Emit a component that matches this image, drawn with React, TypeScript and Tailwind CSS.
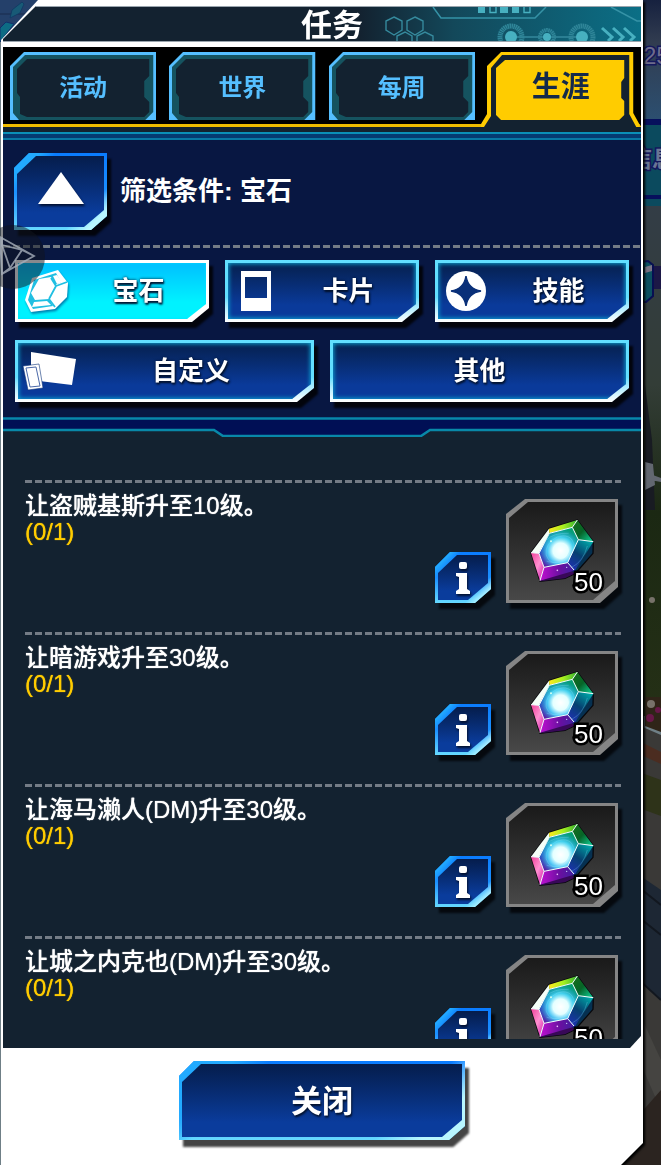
import { useState, type ReactNode } from "react";
import clsx from "clsx";

const TABS = ["活动", "世界", "每周", "生涯"];

const MISSIONS = [
  { title: "让盗贼基斯升至10级。", progress: "(0/1)", reward: 50 },
  { title: "让暗游戏升至30级。", progress: "(0/1)", reward: 50 },
  { title: "让海马濑人(DM)升至30级。", progress: "(0/1)", reward: 50 },
  { title: "让城之内克也(DM)升至30级。", progress: "(0/1)", reward: 50 },
];

const GemIcon = () => (
  <svg width="44" height="44" viewBox="0 0 44 44" className="shrink-0 drop-shadow-[1px_2px_1px_#0080b0]">
    <path d="M8 9 34 1 44 14 43 28 31 40 7 43 1 31Z" fill="#fff" />
    <path d="M10 11 32 4 37 13 31 16 27 8 15 10 7 24 11 31 25 30 29 37 9 40 4 31Z" fill="#20bfe2" />
    <path d="M29 7 33 6 38 13 33 15Z" fill="#fff" />
    <path d="M10 33 23 32 27 36 8 38Z" fill="#fff" />
    <path d="M27 9 32 17 25 30M32 17 43 13M25 30 31 38" fill="none" stroke="#20bfe2" strokeWidth="1.8" />
  </svg>
);

const CardIcon = () => (
  <svg width="44" height="44" viewBox="0 0 44 44" className="shrink-0">
    <path fillRule="evenodd" d="M7 2H37V42H7ZM11 8V29H33V8Z" fill="#fff" />
  </svg>
);

const SkillIcon = () => (
  <svg width="44" height="44" viewBox="0 0 44 44" className="shrink-0">
    <circle cx="22" cy="22" r="20" fill="#fff" />
    <path d="M22 7Q24 20 37 22Q24 24 22 37Q20 24 7 22Q20 20 22 7Z" fill="#0a3079" stroke="#0a3079" strokeWidth="1.5" />
  </svg>
);

const CustomIcon = () => (
  <svg width="54" height="40" viewBox="0 0 54 40" className="-ml-[1px] shrink-0">
    <path d="M8 1 53 8 49 34 8 29Z" fill="#fff" />
    <path d="M0 15 16 13 20 37 5 39Z" fill="#fff" stroke="#0a3079" strokeWidth="0.6" />
    <path d="M3 17 13 16 17 35 7 36Z" fill="#fff" stroke="#4a68a8" strokeWidth="1" />
  </svg>
);

const FILTERS = [
  { label: "宝石", icon: <GemIcon />, span: "col-span-2" },
  { label: "卡片", icon: <CardIcon />, span: "col-span-2" },
  { label: "技能", icon: <SkillIcon />, span: "col-span-2" },
  { label: "自定义", icon: <CustomIcon />, span: "col-span-3" },
  { label: "其他", icon: null, span: "col-span-3" },
];

const Scene = () => (
  <svg
    className="absolute right-0 top-0 h-full w-11"
    viewBox="617 0 44 1165"
    preserveAspectRatio="none"
    aria-hidden="true"
  >
    <defs>
      <linearGradient id="sky" x1="0" y1="0" x2="0" y2="1">
        <stop offset="0" stopColor="#16213f" />
        <stop offset="0.35" stopColor="#313c50" />
        <stop offset="1" stopColor="#2c4f70" />
      </linearGradient>
      <linearGradient id="garden" x1="0" y1="0" x2="0" y2="1">
        <stop offset="0" stopColor="#333d46" />
        <stop offset="0.35" stopColor="#333d37" />
        <stop offset="0.6" stopColor="#1b2813" />
        <stop offset="1" stopColor="#253016" />
      </linearGradient>
    </defs>
    <rect x="617" width="44" height="120" fill="url(#sky)" />
    <text x="643" y="64" fontSize="24" fill="#6d6c8c" stroke="#14185c" strokeWidth="3" paintOrder="stroke" fontFamily="Liberation Sans, sans-serif">25</text>
    <path d="M617 119H661V125H617ZM617 195H661V199H617Z" fill="#07105c" />
    <rect x="617" y="125" width="44" height="70" fill="#0b4a5e" />
    <text x="628" y="167" fontSize="24" fontWeight="bold" fill="#687594" stroke="#14185c" strokeWidth="3" paintOrder="stroke" fontFamily="Noto Sans CJK SC, sans-serif">信息</text>
    <rect x="617" y="199" width="44" height="7" fill="#0b4a5e" />
    <rect x="617" y="206" width="44" height="510" fill="url(#garden)" />
    <path d="M645 266H661V289H645Z" fill="#1c1846" />
    <path d="M640 262 648 261 653 265V296L646 302H640Z" fill="#0b4f60" stroke="#080f52" strokeWidth="2" />
    <path d="M645 267 652 265V271L645 273Z" fill="#777384" />
    <path d="M645 385 652 440 655 510H645Z" fill="#181b22" />
    <path d="M645 462 653 464 655 485 645 490ZM650 474 661 478V482L650 480Z" fill="#626770" />
    <path d="M617 716 661 735V1165H617Z" fill="#3a3937" />
    <path d="M617 744 661 764V752L617 730Z" fill="#4b2c20" />
    <path d="M645 697H661V732L645 726Z" fill="#2f2418" />
    <circle cx="652" cy="600" r="3" fill="#77726a" />
    <circle cx="651" cy="704" r="4" fill="#77726a" />
    <circle cx="650" cy="718" r="4" fill="#671848" />
    <circle cx="658" cy="710" r="3" fill="#671848" />
    <path d="M617 764 661 780V816L617 800Z" fill="#2e3319" />
    <path d="M617 860 661 890V1000L617 960Z" fill="#1d2734" />
    <path d="M617 900 661 935M617 960 661 1000M617 870 661 905" stroke="#12171f" strokeWidth="2" />
    <path d="M617 965 661 1060V1110L617 1010Z" fill="#454441" />
    <path d="M617 1140 661 1090V1165H617Z" fill="#2b2420" />
  </svg>
);

const SceneCorner = () => (
  <svg className="absolute left-0 top-0" width="40" height="42" viewBox="0 0 40 42" aria-hidden="true">
    <rect width="40" height="42" fill="#24406a" />
    <path d="M0 14H26" stroke="#182a4c" />
    <path d="M22 2 12 10 10 18 20 13 24 4Z" fill="#185a76" stroke="#123c66" />
    <path d="M0 42V28L6 22 14 24Z" fill="#0d6b84" stroke="#10306c" />
  </svg>
);

const HeaderArt = () => (
  <svg
    className="absolute right-0 top-0 h-full w-[312px]"
    viewBox="330 7 312 34"
    preserveAspectRatio="none"
    aria-hidden="true"
  >
    <defs>
      <linearGradient id="header-bg">
        <stop offset="0.1" stopColor="#132230" />
        <stop offset="0.4" stopColor="#13485a" />
        <stop offset="1" stopColor="#0b6f86" />
      </linearGradient>
    </defs>
    <rect x="330" y="7" width="312" height="34" fill="url(#header-bg)" />
    <g fill="none" stroke="#35899c" strokeWidth="1.4">
      <path d="M395 17 403 21V30L395 35 387 30V21ZM416 17 424 21V30L416 35 408 30V21Z" />
      <path d="M398 41V36L406 32 413 36V41M418 41V36L426 32 434 36V41" />
    </g>
    <path d="M434 7 442 18H536L547 7M612 7 638 21H642" fill="none" stroke="#3592a6" strokeWidth="1.5" />
    <path d="M479 7H486V13H479ZM501 7H509V13H501ZM513 7H520V13H513Z" fill="#47b0c0" />
    <path d="M491 7V12.500H497V7M525 7V12.500H531V7" fill="none" stroke="#47b0c0" strokeWidth="1.4" />
    <path d="M511 37H584" stroke="#35899c" strokeWidth="1.6" />
    <g fill="none" stroke="#2f8598" strokeWidth="5" strokeDasharray="1.500 0.500">
      <circle cx="512" cy="37" r="11" />
      <circle cx="548" cy="37" r="7" strokeWidth="4" />
      <circle cx="583" cy="37" r="11" />
    </g>
    <g fill="#47b0c0">
      <circle cx="512" cy="37" r="6" />
      <circle cx="548" cy="37" r="4" />
      <circle cx="583" cy="37" r="6" />
    </g>
    <path d="M603 28 613 37 609 41M614 28 624 37 620 41M625 28 635 37 631 41" fill="none" stroke="#47b0c0" strokeWidth="3" />
  </svg>
);

const TabFrame = () => (
  <svg
    className="absolute inset-0 h-full w-full"
    viewBox="0 0 146 68"
    preserveAspectRatio="none"
    aria-hidden="true"
  >
    <path d="M0 14 14 0H146V68H0Z" fill="#55bfff" />
    <path d="M3 15 15 3H143V60L135 68H9L3 61Z" fill="#15535f" />
    <path d="M7 17 17 7H139V24L134 29V45L139 50V60L134 65H17L10 62V45L7 41Z" fill="#132230" />
  </svg>
);

const ActiveTabFrame = () => (
  <svg
    className="absolute -left-[7px] top-0 h-[75px] w-[calc(100%+14px)]"
    viewBox="0 0 160 75"
    preserveAspectRatio="none"
    aria-hidden="true"
  >
    <path d="M152 61 160 75V60Z" fill="#000" />
    <path d="M0 72 6 62V14L20 0H152V61L158 72V75H0Z" fill="#ffcc00" />
    <path d="M3 75 10 64V16L21 3H148V62L155 75Z" fill="#132230" />
    <path d="M15 16 24 8H143V26L140 30V46L143 49V63L138 68H20L15 63Z" fill="#ffcc00" />
  </svg>
);

const DashedLine = ({ className }: { className?: string }) => (
  <div
    className={clsx(
      "h-[3px] bg-[repeating-linear-gradient(90deg,#747c86_0_7px,transparent_7px_10px)]",
      className
    )}
  />
);

type CutButtonProps = {
  children: ReactNode;
  className?: string;
  label?: string;
  expanded?: boolean;
  onClick?: () => void;
};

// blue button with the top left and bottom right corners cut off
const CutButton = ({ children, className, label, expanded, onClick }: CutButtonProps) => (
  <button
    type="button"
    aria-label={label}
    aria-expanded={expanded}
    onClick={onClick}
    className={clsx("relative flex shrink-0 items-center justify-center", className)}
  >
    <span className="absolute inset-0 bg-[linear-gradient(135deg,#22aaff_0%,#22aaff_15%,transparent_25%,transparent_75%,#b8f6ff_88%),linear-gradient(180deg,#0a7cff,#1b8fff_50%,#66d9ff)] [clip-path:polygon(15px_0,100%_0,100%_calc(100%_-_14px),calc(100%_-_16px)_100%,0_100%,0_15px)]" />
    <span className="absolute inset-[3px] bg-linear-to-b from-[#051d4c] to-[#0a3c9c] to-80% [clip-path:polygon(19px_0,100%_0,100%_calc(100%_-_17px),calc(100%_-_20px)_100%,0_100%,0_18px)]" />
    <span className="relative">{children}</span>
  </button>
);

type FilterButtonProps = {
  label: string;
  icon: ReactNode;
  span: string;
  active: boolean;
  onClick: () => void;
};

const FilterButton = ({ label, icon, span, active, onClick }: FilterButtonProps) => (
  <button
    type="button"
    aria-pressed={active}
    onClick={onClick}
    className={clsx(
      "relative flex h-[62px] items-center text-[26px] font-bold text-white drop-shadow-[4px_6px_1px_#02040c]",
      span
    )}
  >
    <span
      className={clsx(
        "absolute inset-0 [clip-path:polygon(0_0,100%_0,100%_calc(100%_-_14px),calc(100%_-_17px)_100%,0_100%)]",
        active ? "bg-white" : "bg-linear-to-b from-[#62dfff] from-60% to-white"
      )}
    />
    <span
      className={clsx(
        "absolute inset-[3px] [clip-path:polygon(0_0,100%_0,100%_calc(100%_-_15px),calc(100%_-_19px)_100%,0_100%)]",
        active
          ? "bg-linear-to-b from-[#00bfff] to-[#00f2ff] to-70% shadow-[inset_0_0_3px_#00e0ff]"
          : "bg-linear-to-b from-[#06204f] to-[#0a3a9a] to-75% shadow-[inset_0_0_4px_1px_#0ba0d0]"
      )}
    />
    {icon && <span className="relative flex w-[53px] shrink-0 justify-start pl-[9px]">{icon}</span>}
    <span className="relative flex-1 text-center [text-shadow:1px_2px_2px_#03122e,0_0_3px_#03122e]">
      {label}
    </span>
  </button>
);

const RewardGem = () => (
  <svg className="absolute inset-0 h-full w-full" viewBox="18 27 336 312" aria-hidden="true">
    <defs>
      <radialGradient id="gem-core" gradientUnits="userSpaceOnUse" cx="182" cy="182" r="66">
        <stop offset="0" stopColor="#fff" />
        <stop offset="0.35" stopColor="#e4ffff" />
        <stop offset="0.6" stopColor="#4fdcff" stopOpacity="0.85" />
        <stop offset="1" stopColor="#20a0d0" stopOpacity="0" />
      </radialGradient>
      <linearGradient id="gem-face" x1="0.7" y1="0" x2="0.3" y2="1">
        <stop offset="0" stopColor="#06a070" />
        <stop offset="0.4" stopColor="#0a90a0" />
        <stop offset="0.7" stopColor="#2850c0" />
        <stop offset="1" stopColor="#5c18a8" />
      </linearGradient>
      <linearGradient id="gem-top">
        <stop offset="0" stopColor="#ffe820" />
        <stop offset="0.5" stopColor="#a8f020" />
        <stop offset="1" stopColor="#30b030" />
      </linearGradient>
      <linearGradient id="gem-right" x1="0" y1="0" x2="1" y2="1">
        <stop offset="0" stopColor="#187018" />
        <stop offset="0.5" stopColor="#066428" />
        <stop offset="1" stopColor="#10d8a0" />
      </linearGradient>
      <linearGradient id="gem-blue" x1="0.8" y1="0" x2="0.2" y2="1">
        <stop offset="0" stopColor="#00a8a8" />
        <stop offset="0.5" stopColor="#064070" />
        <stop offset="1" stopColor="#2030b8" />
      </linearGradient>
      <linearGradient id="gem-purple">
        <stop offset="0" stopColor="#c010d0" />
        <stop offset="0.6" stopColor="#6810a0" />
        <stop offset="1" stopColor="#4020a0" />
      </linearGradient>
      <linearGradient id="gem-pink" x1="0" y1="0" x2="1" y2="1">
        <stop offset="0" stopColor="#f04098" />
        <stop offset="0.5" stopColor="#ff90d0" />
        <stop offset="1" stopColor="#d010b0" />
      </linearGradient>
    </defs>
    <path d="M93 188 147 116 232 90 280 155 279 190 226 250 195 265 120 274Z" fill="#063050" stroke="#08080c" strokeWidth="4" />
    <path d="M120 274 195 265 226 250 205 238Z" fill="#380858" />
    <path d="M93 188 147 116 148 130 117 190Z" fill="#f4fff8" />
    <path d="M147 116 232 90 217 112 148 130Z" fill="url(#gem-top)" />
    <path d="M232 90 280 155 235 149 217 112Z" fill="url(#gem-right)" />
    <path d="M280 155 235 149 203 218 222 246Z" fill="url(#gem-blue)" />
    <path d="M120 272 132 232 203 218 222 242Z" fill="url(#gem-purple)" />
    <path d="M93 188 117 190 132 232 120 272Z" fill="url(#gem-pink)" />
    <path d="M148 130 217 112 235 149 203 218 132 232 117 190Z" fill="url(#gem-face)" />
    <path d="M148 130 217 112 235 149 203 218 132 232 117 190Z" fill="url(#gem-core)" />
    <g fill="none" stroke="#8fe8ff" strokeOpacity="0.5" strokeWidth="1.5">
      <ellipse cx="180" cy="178" rx="46" ry="36" transform="rotate(-40 180 178)" />
      <path d="M140 214Q190 232 212 180M262 168Q250 215 215 232M140 150Q160 128 206 130" />
    </g>
    <path d="M148 130 217 112 235 149 203 218 132 232 117 190ZM93 188 117 190M132 232 120 272M203 218 222 240M235 149 280 155M217 112 232 90" fill="none" stroke="#f4ffff" strokeWidth="3" strokeLinejoin="round" />
    <circle cx="153" cy="154" r="3" fill="#d8fff0" />
    <circle cx="172" cy="241" r="2.500" fill="#f0c0ff" />
    <circle cx="200" cy="232" r="2" fill="#d0e0ff" />
  </svg>
);

const Mission = ({ title, progress, reward }: (typeof MISSIONS)[number]) => (
  <li className="h-[152px] shrink-0">
    <DashedLine />
    <div className="flex items-end pr-[3px] pt-4">
      <div className="-mt-[6px] flex-1 self-start text-2xl leading-[26px] text-white [text-shadow:0_0_1px_currentColor]">
        <h2 className="font-medium">{title}</h2>
        <p className="text-[#fc0]">{progress}</p>
      </div>
      <CutButton label="详情" className="mr-[15px] h-[51px] w-14 drop-shadow-[4px_6px_1px_#05090e]">
        <svg width="16" height="32" viewBox="0 0 16 32" className="drop-shadow-[1px_2px_1px_#021030]">
          <rect x="4" y="0" width="8" height="7" rx="2" fill="#fff" />
          <path d="M1 11H12V27L15 29V32H1V29L4 27V15L1 14Z" fill="#fff" />
        </svg>
      </CutButton>
      <div className="relative h-[104px] w-28 drop-shadow-[4px_6px_1px_#05090e]">
        <div className="absolute inset-0 bg-[#858585] [clip-path:polygon(19px_0,100%_0,100%_calc(100%_-_16px),calc(100%_-_18px)_100%,0_100%,0_15px)]" />
        <div className="absolute inset-[3px] bg-linear-to-b from-[#1a1a1a] to-[#484848] [clip-path:polygon(19px_0,100%_0,100%_calc(100%_-_19px),calc(100%_-_22px)_100%,0_100%,0_16px)]" />
        <RewardGem />
        <span className="absolute bottom-2 right-[15px] text-[26px] leading-[26px] text-white [-webkit-text-stroke:5px_#000] [paint-order:stroke_fill]">
          {reward}
        </span>
      </div>
    </div>
  </li>
);

const App = () => {
  const [tab, setTab] = useState("生涯");
  const [filter, setFilter] = useState("宝石");
  const [filtersOpen, setFiltersOpen] = useState(true);

  return (
    <main className="relative flex h-screen overflow-hidden bg-[#6f7f86] pr-[18px] font-['Liberation_Sans','Noto_Sans_CJK_SC',sans-serif]">
      <Scene />
      <SceneCorner />
      <div className="relative flex min-w-0 flex-1 drop-shadow-[2px_2px_1px_#000]">
        <div className="flex min-w-0 flex-1 flex-col bg-white pl-[3px] pr-[2px] pt-[6px] [clip-path:polygon(38px_0,100%_0,100%_calc(100%_-_22px),calc(100%_-_22px)_100%,1px_100%,1px_40px)]">
          <header className="relative flex h-9 items-center justify-center border-y border-[#9aa5ae] bg-[#132230] pl-5 pt-1 [clip-path:polygon(33px_0,100%_0,100%_100%,0_100%,0_33px)]">
            <HeaderArt />
            <h1 className="relative text-[31px] font-bold leading-9 text-white">任务</h1>
          </header>

          <nav className="mt-[5px] bg-[#132230] pb-[5px]">
            <div
              role="tablist"
              className="grid grid-cols-4 gap-x-[13px] border-b-[3px] border-[#f0bd00] bg-black px-[7px] pb-1 pt-[5px]"
            >
              {TABS.map((name) => (
                <button
                  key={name}
                  type="button"
                  role="tab"
                  aria-selected={tab === name}
                  onClick={() => setTab(name)}
                  className={clsx(
                    "relative h-[68px] pt-1 font-bold",
                    tab === name ? "text-[29px] text-[#14294a]" : "text-2xl text-[#55bfff]"
                  )}
                >
                  {tab === name ? <ActiveTabFrame /> : <TabFrame />}
                  <span className="relative">{name}</span>
                </button>
              ))}
            </div>
          </nav>

          <section className="border-t-2 border-[#0a8fb8] bg-[#081742]">
            <div className="h-[6px] border-b-2 border-[#0878a4] bg-[#053a72]" />
            <div className="flex items-center gap-[13px] px-[11px] pt-[13px]">
              <CutButton
                label="收起筛选"
                expanded={filtersOpen}
                onClick={() => setFiltersOpen(!filtersOpen)}
                className="h-[77px] w-[93px] pb-2 drop-shadow-[4px_6px_1px_#02040c]"
              >
                <svg width="46" height="32" viewBox="0 0 46 32" className="drop-shadow-[1px_2px_1px_#021030]">
                  <path d="M23 0 46 32H0Z" fill="#fff" />
                </svg>
              </CutButton>
              <p className="text-[26px] font-bold text-white">筛选条件: {filter}</p>
            </div>
            <DashedLine className="mt-[15px]" />
            {filtersOpen && (
              <div className="grid grid-cols-6 gap-x-4 gap-y-[18px] px-3 pb-[15px] pt-3">
                {FILTERS.map((item) => (
                  <FilterButton
                    key={item.label}
                    {...item}
                    active={filter === item.label}
                    onClick={() => setFilter(item.label)}
                  />
                ))}
              </div>
            )}
          </section>

          <section className="flex min-h-0 flex-1 flex-col bg-[#132230] pb-[9px] [clip-path:polygon(0_0,100%_0,100%_calc(100%_-_12px),calc(100%_-_11px)_100%,0_100%)]">
            <svg className="h-5 w-full shrink-0" viewBox="0 0 638 20" preserveAspectRatio="none" aria-hidden="true">
              <path d="M0 0H638V13H427L418 19H220L211 13H0Z" fill="#000f55" />
              <path d="M0 1.500H638M0 13H211L220 19H418L427 13H638" fill="none" stroke="#0888a8" strokeWidth="2.500" />
            </svg>
            <ul className="flex min-h-0 flex-1 flex-col overflow-y-auto pl-[22px] pr-5 [scrollbar-width:none]">
              <li className="h-[43px] shrink-0" aria-hidden="true" />
              {MISSIONS.map((mission) => (
                <Mission key={mission.title} {...mission} />
              ))}
            </ul>
          </section>

          <footer className="flex justify-center pb-[25px] pt-[13px]">
            <CutButton className="h-[79px] w-[286px] pt-1 drop-shadow-[4px_7px_1px_#444]">
              <span className="text-[31px] font-bold text-white [text-shadow:1px_2px_2px_#03122e]">
                关闭
              </span>
            </CutButton>
          </footer>
        </div>
      </div>

      <svg className="absolute left-0 top-[225px]" width="46" height="64" viewBox="0 0 46 64" aria-hidden="true">
        <circle cx="13" cy="32" r="32" fill="#10141c" fillOpacity="0.5" />
        <path d="M0 12 34 31 2 49ZM2 20 22 25 10 43ZM2 20V12M22 25 34 31M10 43 2 49" fill="none" stroke="#a9b0bd" strokeOpacity="0.8" strokeWidth="1.8" />
      </svg>
    </main>
  );
};

export default App;
